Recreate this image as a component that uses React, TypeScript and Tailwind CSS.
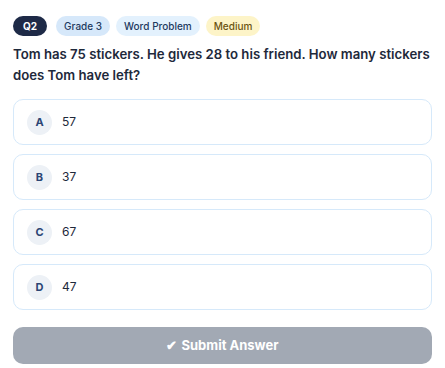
import React from 'react';

const options = [
  { key: 'A', value: '57' },
  { key: 'B', value: '37' },
  { key: 'C', value: '67' },
  { key: 'D', value: '47' },
];

export default function App() {
  return (
    <div className="w-[445px] h-[368px] bg-white px-[13px] pt-4 font-['Inter',sans-serif] text-[#1e293b]">
      <div className="flex items-center gap-1.5">
        <span className="h-5 px-2.5 mr-[3px] rounded-full bg-[#1e2a47] text-white text-[10px] font-bold flex items-center">Q2</span>
        <span className="h-5 px-2 rounded-full bg-[#d6e8fa] text-[#1e3a5f] text-[10px] font-medium flex items-center">Grade 3</span>
        <span className="h-5 px-2 rounded-full bg-[#e3f1fd] text-[#1e3a5f] text-[10px] font-medium flex items-center">Word Problem</span>
        <span className="h-5 px-2 rounded-full bg-[#fdf4c8] text-[#6b5310] text-[10px] font-medium flex items-center">Medium</span>
      </div>
      <p className="mt-2 text-[13.2px] leading-[21px] font-semibold text-[#1e293b]">
        Tom has 75 stickers. He gives 28 to his friend. How many stickers does Tom have left?
      </p>
      <div className="mt-[13px] flex flex-col gap-[9px]">
        {options.map((o) => (
          <div
            key={o.key}
            className="h-[46px] rounded-[10px] border border-[#d6e9fa] bg-white flex items-center pl-[13px] gap-[10px]"
          >
            <span className="w-[25px] h-[25px] rounded-full bg-[#edf1f6] text-[#2b4574] text-[11px] font-bold flex items-center justify-center">
              {o.key}
            </span>
            <span className="text-[12px] text-[#1e293b]">{o.value}</span>
          </div>
        ))}
      </div>
      <button className="mt-[17px] w-full h-[37px] rounded-[10px] bg-[#a2a9b4] text-white text-[13px] font-bold flex items-center justify-center gap-1">
        <span>✔</span>
        <span>Submit Answer</span>
      </button>
    </div>
  );
}
